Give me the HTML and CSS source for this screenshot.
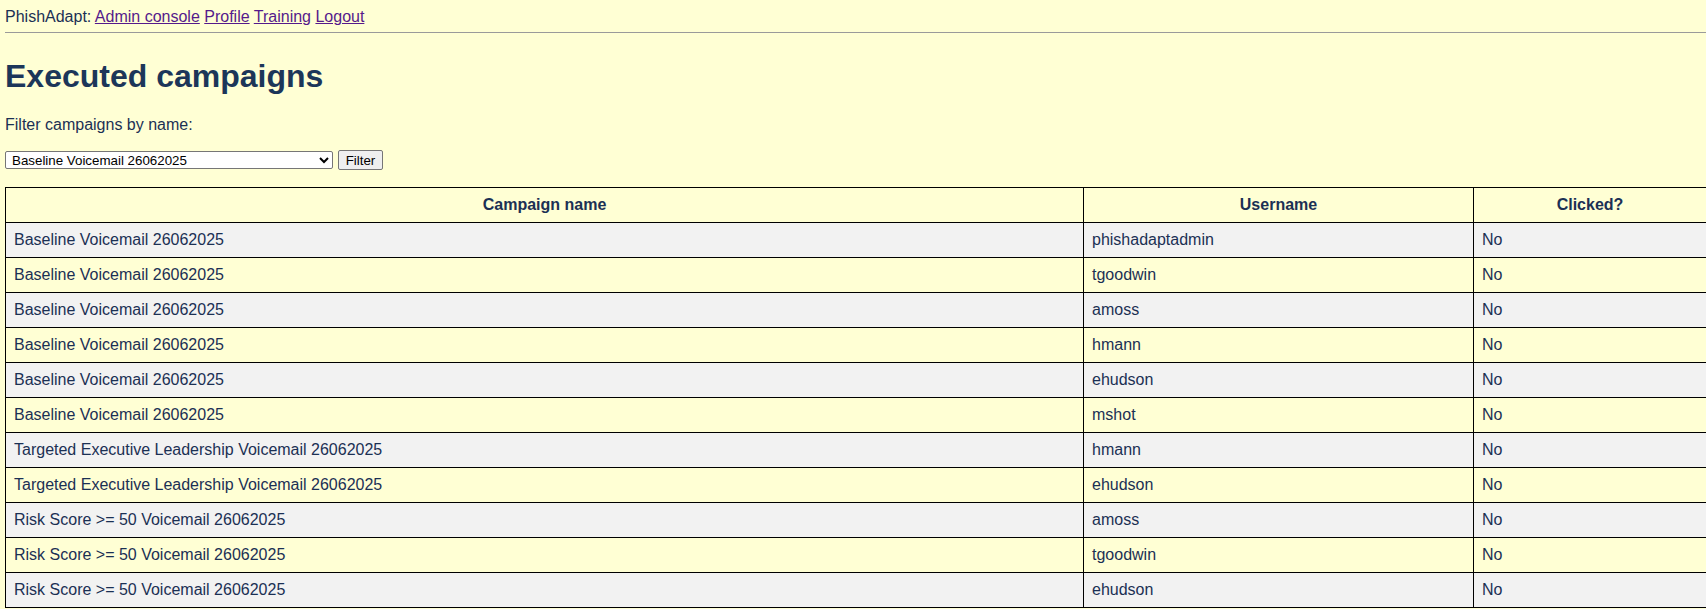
FILE: index.html
```html
<!DOCTYPE html>
<html lang="en">
<head>
<meta charset="utf-8">
<title>Executed campaigns</title>
<link rel="stylesheet" href="styles.css">
</head>
<body>
<div class="nav">PhishAdapt: <a href="#admin">Admin console</a> <a href="#profile">Profile</a> <a href="#training">Training</a> <a href="#logout">Logout</a></div>
<hr class="rule">
<h1 class="title">Executed campaigns</h1>
<p class="label">Filter campaigns by name:</p>
<form class="filter">
<select class="picker" name="campaign">
<option>Baseline Voicemail 26062025</option>
<option>Targeted Executive Leadership Voicemail 26062025</option>
<option>Risk Score &gt;= 50 Voicemail 26062025</option>
</select>
<button type="button" class="btn">Filter</button>
</form>
<div class="wrap">
<table class="grid">
<colgroup><col class="c1"><col class="c2"><col class="c3"></colgroup>
<thead>
<tr><th>Campaign name</th><th>Username</th><th>Clicked?</th></tr>
</thead>
<tbody>
<tr><td>Baseline Voicemail 26062025</td><td>phishadaptadmin</td><td>No</td></tr>
<tr><td>Baseline Voicemail 26062025</td><td>tgoodwin</td><td>No</td></tr>
<tr><td>Baseline Voicemail 26062025</td><td>amoss</td><td>No</td></tr>
<tr><td>Baseline Voicemail 26062025</td><td>hmann</td><td>No</td></tr>
<tr><td>Baseline Voicemail 26062025</td><td>ehudson</td><td>No</td></tr>
<tr><td>Baseline Voicemail 26062025</td><td>mshot</td><td>No</td></tr>
<tr><td>Targeted Executive Leadership Voicemail 26062025</td><td>hmann</td><td>No</td></tr>
<tr><td>Targeted Executive Leadership Voicemail 26062025</td><td>ehudson</td><td>No</td></tr>
<tr><td>Risk Score &gt;= 50 Voicemail 26062025</td><td>amoss</td><td>No</td></tr>
<tr><td>Risk Score &gt;= 50 Voicemail 26062025</td><td>tgoodwin</td><td>No</td></tr>
<tr><td>Risk Score &gt;= 50 Voicemail 26062025</td><td>ehudson</td><td>No</td></tr>
</tbody>
</table>
</div>
</body>
</html>
```
FILE: styles.css
```css
html {
  background: #ffffd4;
}
body {
  margin: 8px 0 8px 5px;
  font-family: "Liberation Sans", Arial, sans-serif;
  font-size: 16px;
  color: #1b3054;
  background: #ffffd4;
  overflow-x: hidden;
}
.nav a {
  color: #551a8b;
}
.rule {
  margin: 6px 0 0 0;
  border: 0;
  border-top: 1px solid #9a9a9a;
  height: 0;
}
.title {
  font-size: 32px;
  font-weight: bold;
  color: #1c3659;
  margin: 25px 0 21px 0;
  line-height: 37px;
}
.label {
  margin: 0 0 16px 0;
}
.filter {
  display: flex;
  align-items: center;
  gap: 5px;
  margin: 0 0 17px 0;
}
.picker {
  font-family: "Liberation Sans", Arial, sans-serif;
  font-size: 13.33px;
  width: 328px;
  height: 18px;
  padding: 0 2px;
  color: #000;
  background: #fff;
  border: 1px solid #767676;
  border-radius: 2px;
  box-sizing: border-box;
}
.btn {
  font-family: "Liberation Sans", Arial, sans-serif;
  font-size: 13.33px;
  width: 45px;
  height: 20px;
  padding: 1px 6px;
  color: #000;
  background: #efefef;
  border: 1px solid #767676;
  border-radius: 2px;
}
.wrap {
  width: 1702px;
}
.grid {
  border-collapse: collapse;
  width: 1702px;
  table-layout: fixed;
}
.c1 { width: 1078px; }
.c2 { width: 390px; }
.grid th,
.grid td {
  border: 1px solid #000;
  padding: 8px;
  line-height: 18px;
  text-align: left;
}
.grid th {
  text-align: center;
  font-weight: bold;
}
.grid tbody tr:nth-child(odd) {
  background: #f2f2f2;
}
```
